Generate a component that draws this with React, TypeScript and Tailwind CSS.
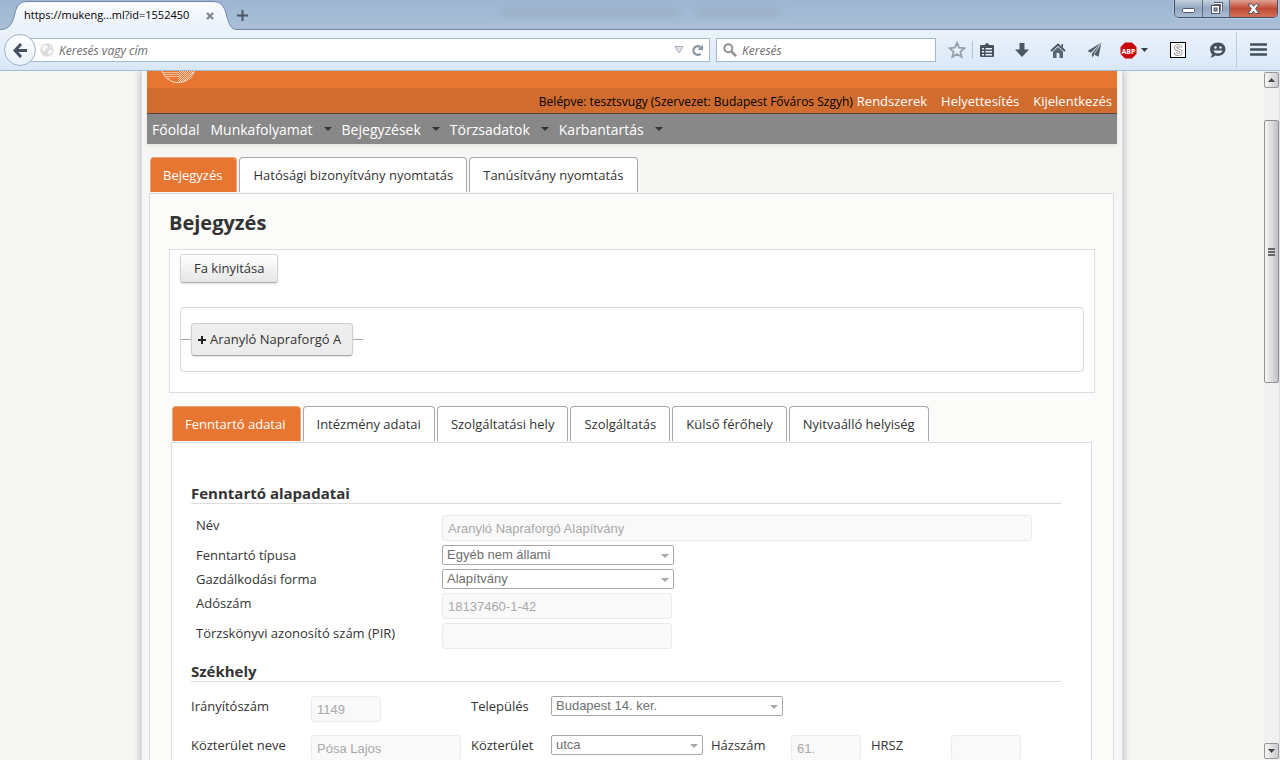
import { useState } from "react";
import type { ReactNode } from "react";

// ─── Data ──────────────────────────────────────────────────────────────────────
const PAGE_TABS = ["Bejegyzés", "Hatósági bizonyítvány nyomtatás", "Tanúsítvány nyomtatás"];

const DATA_TABS = [
  "Fenntartó adatai",
  "Intézmény adatai",
  "Szolgáltatási hely",
  "Szolgáltatás",
  "Külső férőhely",
  "Nyitvaálló helyiség",
];

const MENU = ["Munkafolyamat", "Bejegyzések", "Törzsadatok", "Karbantartás"];
const USER_LINKS = ["Rendszerek", "Helyettesítés", "Kijelentkezés"];

// ─── Browser chrome ────────────────────────────────────────────────────────────
function WindowButtons() {
  return (
    <div className="mr-[2px] flex h-[18px] overflow-hidden rounded-b-[5px] border border-t-0 border-[#46546a] shadow-[0_0_2px_#dfe9f5]">
      <button aria-label="Kis méret" className="flex w-7 items-center justify-center border-r border-[#5d6c82] bg-linear-to-b from-[#c3d0df] via-[#93a7c0] to-[#a9bdd5]">
        <svg width="13" height="6" viewBox="0 0 13 6" className="mt-1">
          <rect x="0.5" y="0.5" width="12" height="4" rx="1" fill="#fff" stroke="#535666" />
        </svg>
      </button>
      <button aria-label="Előző méret" className="flex w-[27px] items-center justify-center border-r border-[#5d6c82] bg-linear-to-b from-[#c3d0df] via-[#93a7c0] to-[#a9bdd5]">
        <svg width="13" height="13" viewBox="0 0 13 13">
          <path d="M4 1.500h7.500V9" fill="none" stroke="#535666" strokeWidth="3" />
          <path d="M4 1.500h7.500V9" fill="none" stroke="#fff" strokeWidth="1.200" />
          <rect x="1.5" y="3.5" width="8" height="8" fill="#fff" stroke="#535666" />
          <rect x="4" y="6" width="3" height="3" fill="#93a7c0" stroke="#535666" />
        </svg>
      </button>
      <button aria-label="Bezárás" className="flex w-[47px] items-center justify-center bg-linear-to-b from-[#e0a192] via-[#c04a35] to-[#d4705a]">
        <svg width="13" height="12" viewBox="0 0 13 12">
          <path d="M1 1h3.600l1.900 2.400L8.400 1H12L8.600 5.800 12 10.500H8.400L6.500 8.200 4.600 10.500H1l3.400-4.700z" fill="#fff" stroke="#535666" />
        </svg>
      </button>
    </div>
  );
}

function TitleBar() {
  return (
    <div className="flex h-[30px] items-start bg-linear-to-b from-[#9db6d3] to-[#abc0d8] shadow-[inset_0_-1px_0_#7189a6]">
      <div className="relative h-[30px] w-[237px] shrink-0">
        <svg width="237" height="30" viewBox="0 0 237 30" className="absolute left-0 top-0">
          <defs>
            <linearGradient id="tabFill" x1="0" y1="0" x2="0" y2="1">
              <stop offset="0" stopColor="#fbfcfe" />
              <stop offset="1" stopColor="#e9f1fa" />
            </linearGradient>
          </defs>
          <path
            d="M0 29.500C9 29.500 12 24 14 17 16 8 18 1.500 27 1.500H213C222 1.500 225 8 227 17 229 24 231 29.500 237 29.500V30H0z"
            fill="url(#tabFill)"
          />
          <path
            d="M0 29.500C9 29.500 12 24 14 17 16 8 18 1.500 27 1.500H213C222 1.500 225 8 227 17 229 24 231 29.500 237 29.500"
            fill="none"
            stroke="#7189a6"
          />
        </svg>
        <div className="relative flex h-[30px] items-center pl-6 pt-px text-[11px] text-black">
          <span className="w-[172px] whitespace-nowrap">https://mukeng...ml?id=1552450</span>
          <button aria-label="Lap bezárása" className="ml-[10px]">
            <svg width="8" height="8" viewBox="0 0 8 8">
              <path d="M1 1l6 6M7 1L1 7" stroke="#7f8893" strokeWidth="2.400" />
            </svg>
          </button>
        </div>
      </div>
      <button aria-label="Új lap" className="mt-[10px]">
        <svg width="11" height="11" viewBox="0 0 11 11">
          <path d="M5.500 0v11M0 5.500h11" stroke="#4a5866" strokeWidth="2" />
        </svg>
      </button>
      {/* title of the window behind, seen through the glass */}
      <div className="flex flex-1 gap-4 pl-[254px] pt-2">
        <span className="h-2 w-[178px] bg-[#8f9fb2]/40 blur-[3px]" />
        <span className="h-2 w-[84px] bg-[#8f9fb2]/40 blur-[3px]" />
      </div>
      <WindowButtons />
    </div>
  );
}

const TOOL = "flex h-5 w-5 shrink-0 items-center justify-center";

function ToolbarIcons() {
  return (
    <div className="flex h-full items-center">
      <button aria-label="Könyvjelző" className={`${TOOL} ml-[11px]`}>
        <svg width="18" height="18" viewBox="0 0 18 18">
          <path d="M9 1.800l2.100 4.900 5.300.5-4 3.500 1.200 5.200L9 13.100l-4.600 2.800 1.200-5.200-4-3.500 5.300-.5z" fill="#e8eff8" stroke="#95a0ad" strokeWidth="1.800" />
        </svg>
      </button>
      <span className="ml-[5px] h-[18px] w-px bg-[#b4c3d4]" />
      <button aria-label="Könyvjelzők listája" className={`${TOOL} ml-1`}>
        <svg width="16" height="16" viewBox="0 0 16 16">
          <path d="M1 4a1 1 0 0 1 1-1h3.500L8 .8 10.500 3H14a1 1 0 0 1 1 1v10a1 1 0 0 1-1 1H2a1 1 0 0 1-1-1z" fill="#46525f" />
          <path d="M3 6h2v1.500H3zM6.500 6H13v1.500H6.500zM3 9h2v1.500H3zM6.500 9H13v1.500H6.500zM3 12h2v1.500H3zM6.500 12H13v1.500H6.500z" fill="#e8f0f9" />
        </svg>
      </button>
      <button aria-label="Letöltések" className={`${TOOL} ml-[15px]`}>
        <svg width="14" height="15" viewBox="0 0 14 15">
          <path d="M4.500 0h5v6.500H14l-7 7.500-7-7.500h4.500z" fill="#4a5763" />
        </svg>
      </button>
      <button aria-label="Kezdőlap" className={`${TOOL} ml-4`}>
        <svg width="16" height="15" viewBox="0 0 16 15">
          <path d="M1 8l7-6.500L15 8" fill="none" stroke="#46525f" strokeWidth="1.800" />
          <path d="M11.500 1H13v4l-1.500-1.500z" fill="#46525f" />
          <path d="M3 8.500L8 4l5 4.500V15H9.500v-5h-3v5H3z" fill="#596673" />
        </svg>
      </button>
      <button aria-label="Megosztás" className={`${TOOL} ml-4`}>
        <svg width="15" height="16" viewBox="0 0 15 16">
          <path d="M14.500.5L.5 9l3.300 1.800zM14.500.5L5 11.500v4l2.400-2.700 4.100 2z" fill="#4f5c69" />
          <path d="M14.500.5L7 12.500" stroke="#dfe8f2" strokeWidth="0.800" />
        </svg>
      </button>
      <button aria-label="Adblock Plus" className="ml-[16px] flex items-center gap-1">
        <svg width="17" height="17" viewBox="0 0 17 17">
          <path d="M5 .5h7L16.500 5v7L12 16.500H5L.5 12V5z" fill="#c8070d" />
          <text x="8.500" y="11.500" textAnchor="middle" fill="#fff" className="font-['Open_Sans',sans-serif] text-[7px] font-bold">
            ABP
          </text>
        </svg>
        <svg width="7" height="4" viewBox="0 0 7 4">
          <path d="M0 0h7L3.500 4z" fill="#333f4a" />
        </svg>
      </button>
      <button aria-label="Stylish" className={`${TOOL} ml-5`}>
        <svg width="16" height="16" viewBox="0 0 16 16">
          <rect x="0.5" y="0.5" width="15" height="15" fill="#fff" stroke="#000" />
          <path d="M11 5.500C10.500 3 5.500 3 5.500 5.700c0 2.800 5.500 1.500 5.500 4.500 0 2.800-5.500 2.800-6 0" fill="none" stroke="#8a8a8a" strokeWidth="3" />
          <path d="M11 5.500C10.500 3 5.500 3 5.500 5.700c0 2.800 5.500 1.500 5.500 4.500 0 2.800-5.500 2.800-6 0" fill="none" stroke="#fff" strokeWidth="1.400" />
        </svg>
      </button>
      <button aria-label="Hello" className={`${TOOL} ml-[19px]`}>
        <svg width="17" height="16" viewBox="0 0 17 16">
          <path d="M9 .5c4.400 0 7.500 2.900 7.500 6.600S13.400 14 9 14c-1 0-2-.1-2.800-.4-1.200 1.200-3 1.900-5 1.900 1.100-.8 1.700-2 1.800-3.200C1.800 11 1 9.200 1 7.100 1 3.400 4.600.5 9 .5z" fill="#46525f" />
          <circle cx="6.500" cy="5.500" r="1.200" fill="#e8f0f9" />
          <circle cx="11.500" cy="5.500" r="1.200" fill="#e8f0f9" />
          <path d="M4.500 8.500h9c-.5 3.800-8.500 3.800-9 0z" fill="#e8f0f9" />
        </svg>
      </button>
      <span className="ml-[9px] h-9 w-px bg-[#bccbdc]" />
      <button aria-label="Menü" className="ml-[13px] mr-[13px]">
        <svg width="17" height="14" viewBox="0 0 17 14">
          <path d="M1 1.500h15M1 6.500h15M1 11.500h15" stroke="#43505c" strokeWidth="2.600" strokeLinecap="round" />
        </svg>
      </button>
    </div>
  );
}

function Toolbar() {
  return (
    <div className="flex h-[41px] items-center border-b border-[#a3bbd4] bg-linear-to-b from-[#ebf2fa] to-[#d9e8f9]">
      <button aria-label="Vissza" className="relative z-10 ml-1 flex h-8 w-8 shrink-0 items-center justify-center rounded-full border border-[#9fb2c8] bg-linear-to-b from-white to-[#e8f0f9]">
        <svg width="15" height="15" viewBox="0 0 15 15">
          <path d="M8 1L2 7.500 8 14M2 7.500h12" fill="none" stroke="#46525f" strokeWidth="3" />
        </svg>
      </button>
      <div className="-ml-2 flex h-6 flex-1 items-center border border-[#a5b9ce] bg-white pl-[11px] pr-[5px]">
        <svg width="14" height="14" viewBox="0 0 14 14" className="shrink-0">
          <circle cx="7" cy="7" r="6.800" fill="#dcdcdc" />
          <path d="M3 2l4 .5 1 2-2.500 1.500L4.500 9 2 6zM9 7.500l3-1 .5 2.500L9 12 8 9.500zM9.500 2l2.500 2-2 .8z" fill="#fafafa" />
        </svg>
        <input aria-label="Keresés vagy cím" placeholder="Keresés vagy cím" className="ml-[5px] min-w-0 flex-1 pt-px text-xs italic outline-none placeholder:text-[#6e6e6e]" />
        <svg width="10" height="8" viewBox="0 0 10 8">
          <path d="M.8.5h8.400L5 7z" fill="#dde2ea" stroke="#a9b1bd" />
        </svg>
        <button aria-label="Frissítés" className="ml-[7px]">
          <svg width="13" height="13" viewBox="0 0 13 13">
            <path d="M9.500 9.800A4.300 4.300 0 1 1 9.200 3" fill="none" stroke="#8793a3" strokeWidth="2.200" />
            <path d="M12 .5V6H6.500z" fill="#8793a3" />
          </svg>
        </button>
      </div>
      <div className="ml-[6px] flex h-6 w-[220px] items-center border border-[#a5b9ce] bg-white pl-[6px]">
        <svg width="14" height="14" viewBox="0 0 14 14" className="shrink-0">
          <circle cx="5.300" cy="5.300" r="4" fill="none" stroke="#909090" strokeWidth="2" />
          <path d="M8.300 8.300l4.800 4.800" stroke="#909090" strokeWidth="2.600" />
        </svg>
        <input aria-label="Keresés" placeholder="Keresés" className="ml-[5px] min-w-0 flex-1 pt-px text-xs italic outline-none placeholder:text-[#6e6e6e]" />
      </div>
      <ToolbarIcons />
    </div>
  );
}

const SCROLL_BTN = "flex h-4 items-center justify-center rounded-[2px] border border-[#989898] bg-linear-to-r from-[#f6f6f6] to-[#cbcbd0]";

function Scrollbar() {
  return (
    <div className="flex w-4 shrink-0 flex-col border-r border-[#e0e0e0] bg-[#f0f0f0] pt-px">
      <button aria-label="Fel" className={SCROLL_BTN}>
        <svg width="7" height="4" viewBox="0 0 7 4">
          <path d="M0 4h7L3.500 0z" fill="#444" />
        </svg>
      </button>
      <div className="mt-8 flex h-[263px] flex-col items-center justify-center gap-px rounded-[2px] border border-[#919191] bg-linear-to-r from-[#f6f6f6] via-[#dcdcde] to-[#bfbfc6]">
        <span className="h-[2px] w-[7px] bg-[#666]" />
        <span className="h-[2px] w-[7px] bg-[#666]" />
        <span className="h-[2px] w-[7px] bg-[#666]" />
      </div>
      <div className="flex-1" />
      <button aria-label="Le" className={`${SCROLL_BTN} mb-px`}>
        <svg width="7" height="4" viewBox="0 0 7 4">
          <path d="M0 0h7L3.500 4z" fill="#444" />
        </svg>
      </button>
    </div>
  );
}

// ─── Page header ───────────────────────────────────────────────────────────────
function Header() {
  return (
    <header className="shadow-[0_2px_4px_rgba(0,0,0,0.08)]">
      <div className="h-[17px] bg-[#e67632] pl-[14px]">
        {/* lower part of the crest */}
        <svg width="34" height="14" viewBox="0 0 34 14">
          <defs>
            <pattern id="dots" width="2" height="2" patternUnits="userSpaceOnUse">
              <path d="M0 0h1v1H0zM1 1h1v1H1z" fill="#f6cfb4" />
            </pattern>
            <clipPath id="bowl">
              <path d="M0 0h34C32 8 25 12 17 12S2 8 0 0z" />
            </clipPath>
          </defs>
          <g clipPath="url(#bowl)">
            <rect x="17" y="0" width="17" height="13" fill="url(#dots)" />
            <path d="M2 1.500h15M3 3.500h14M4 5.500h13M6 7.500h3" stroke="#f3bd98" />
          </g>
          <path d="M1 0C4 7.500 10 11.500 17 11.500S30 7.500 33 0" fill="none" stroke="#f9dfcd" />
        </svg>
      </div>
      <div className="flex h-[26px] items-center justify-end border-b border-[#4c4440] bg-[#d16c2f] pr-[5px] pt-[2px] text-[13px] text-white">
        <span className="mr-1 text-xs text-black">Belépve: tesztsvugy (Szervezet: Budapest Főváros Szgyh)</span>
        <nav className="flex gap-[14px]">
          {USER_LINKS.map(link => (
            <a key={link} href="#">{link}</a>
          ))}
        </nav>
      </div>
      <nav className="flex h-[30px] items-center bg-[#888] pl-[5px] pt-[2px] text-sm text-white">
        <a href="#" className="mr-[11px]">Főoldal</a>
        {MENU.map(item => (
          <a key={item} href="#" className="mr-[10px] flex items-center gap-[11px]">
            {item}
            <svg width="8" height="4" viewBox="0 0 8 4" className="mb-[2px]">
              <path d="M0 0h8L4 4z" fill="#333" />
            </svg>
          </a>
        ))}
      </nav>
    </header>
  );
}

// ─── Building blocks ───────────────────────────────────────────────────────────
function TabStrip({ tabs, active, onSelect }: {
  tabs: string[]; active: number; onSelect: (i: number) => void;
}) {
  return (
    <div role="tablist" className="mb-px flex gap-[2px] pl-px">
      {tabs.map((tab, i) => (
        <button
          key={tab}
          role="tab"
          aria-selected={i === active}
          onClick={() => onSelect(i)}
          className={
            i === active
              ? "h-[35px] rounded-t-[4px] border border-b-0 border-[#e9a67c] bg-[#e67632] pl-3 pr-[14px] pt-[2px] text-white"
              : "h-[35px] rounded-t-[4px] border border-b-0 border-[#a8a8a8] bg-white px-[13px] pt-[2px] text-[#333]"
          }
        >
          {tab}
        </button>
      ))}
    </div>
  );
}

function TextField({ id, value, className }: { id: string; value: string; className: string }) {
  return (
    <input
      id={id}
      defaultValue={value}
      disabled
      className={`h-[26px] rounded-[3px] border border-[#ebebeb] bg-[#f9f9f9] px-[5px] font-['Liberation_Sans',sans-serif] text-[13px] text-[#a9a9a9] ${className}`}
    />
  );
}

function SelectField({ id, value, className }: { id: string; value: string; className: string }) {
  return (
    <div className={`relative h-5 ${className}`}>
      <select
        id={id}
        disabled
        className="block h-5 w-full appearance-none rounded-[2px] border border-[#a8a8a8] bg-white px-1 font-['Liberation_Sans',sans-serif] text-[13px] leading-[18px] text-[#707070] opacity-100"
      >
        <option>{value}</option>
      </select>
      <svg width="8" height="4" viewBox="0 0 8 4" className="pointer-events-none absolute right-[5px] top-[9px]">
        <path d="M0 0h8L4 4z" fill="#a8a8a8" />
      </svg>
    </div>
  );
}

function SectionTitle({ children }: { children: ReactNode }) {
  return (
    <h2 className="h-5 border-b border-[#dcdcdc] text-[15px] font-bold leading-[19px] text-[#333]">{children}</h2>
  );
}

function Row({ id, label, children }: { id: string; label: string; children: ReactNode }) {
  return (
    <div className="flex items-start">
      <label htmlFor={id} className="w-[246px] shrink-0 leading-5">{label}</label>
      {children}
    </div>
  );
}

// ─── Organisation tree ─────────────────────────────────────────────────────────
function TreeBox() {
  return (
    <div className="h-36 border border-[#dcdcdc] bg-white px-[10px] pt-1">
      <button className="h-[29px] rounded-[3px] border border-[#d4d4d4] border-b-[#b0b0b0] bg-linear-to-b from-white to-[#e6e6e6] px-[13px] shadow-[0_1px_2px_rgba(0,0,0,0.12)]">
        Fa kinyitása
      </button>
      <div className="mt-6 flex h-[65px] items-center rounded-[4px] border border-[#dcdcdc]">
        <span className="h-px w-[10px] bg-[#a8a8a8]" />
        <button className="flex h-[33px] items-center gap-1 rounded-[4px] border border-[#d0d0d0] border-b-[#a8a8a8] bg-[#ededed] pl-[6px] pr-[11px] shadow-[0_1px_2px_rgba(0,0,0,0.12)]">
          <svg width="8" height="8" viewBox="0 0 8 8">
            <path d="M4 0v8M0 4h8" stroke="#222" strokeWidth="2" />
          </svg>
          Aranyló Napraforgó A
        </button>
        <span className="h-px w-[10px] bg-[#a8a8a8]" />
      </div>
    </div>
  );
}

// ─── Maintainer form ───────────────────────────────────────────────────────────
function MaintainerForm() {
  return (
    <form className="border border-[#dcdcdc] bg-white pb-24 pl-[19px] pr-[30px] pt-[41px]">
      <SectionTitle>Fenntartó alapadatai</SectionTitle>
      <div className="mt-[11px] flex flex-col gap-1 pl-[5px]">
        <Row id="nev" label="Név">
          <TextField id="nev" value="Aranyló Napraforgó Alapítvány" className="w-[590px]" />
        </Row>
        <Row id="tipus" label="Fenntartó típusa">
          <SelectField id="tipus" value="Egyéb nem állami" className="w-[232px]" />
        </Row>
        <Row id="forma" label="Gazdálkodási forma">
          <SelectField id="forma" value="Alapítvány" className="w-[232px]" />
        </Row>
        <Row id="adoszam" label="Adószám">
          <TextField id="adoszam" value="18137460-1-42" className="w-[230px]" />
        </Row>
        <Row id="pir" label="Törzskönyvi azonosító szám (PIR)">
          <TextField id="pir" value="" className="w-[230px]" />
        </Row>
      </div>

      <div className="mt-[13px]">
        <SectionTitle>Székhely</SectionTitle>
      </div>
      <div className="mt-[14px] grid grid-cols-[120px_160px_80px_160px_80px_80px_80px_70px] items-start gap-y-[13px] leading-5">
        <label htmlFor="irsz">Irányítószám</label>
        <TextField id="irsz" value="1149" className="w-[70px]" />
        <label htmlFor="telepules">Település</label>
        <SelectField id="telepules" value="Budapest 14. ker." className="col-span-5 w-[232px]" />
        <label htmlFor="kozterulet-neve">Közterület neve</label>
        <TextField id="kozterulet-neve" value="Pósa Lajos" className="w-[150px]" />
        <label htmlFor="kozterulet">Közterület</label>
        <SelectField id="kozterulet" value="utca" className="w-[152px]" />
        <label htmlFor="hazszam">Házszám</label>
        <TextField id="hazszam" value="61." className="w-[70px]" />
        <label htmlFor="hrsz">HRSZ</label>
        <TextField id="hrsz" value="" className="w-[70px]" />
      </div>
    </form>
  );
}

// ─── App ───────────────────────────────────────────────────────────────────────
export default function App() {
  const [pageTab, setPageTab] = useState(0);
  const [dataTab, setDataTab] = useState(0);

  return (
    <div className="flex h-screen flex-col overflow-hidden font-['Open_Sans','Noto_Sans',sans-serif]">
      <TitleBar />
      <Toolbar />
      <div className="flex min-h-0 flex-1 bg-[#f6f6f4]">
        <div className="min-w-0 flex-1 overflow-hidden">
          <div className="mx-auto max-w-[982px] border-x border-[#dcdcdc] bg-[#f6f6f4] px-[5px] text-[13px] text-[#333] shadow-[0_0_8px_rgba(0,0,0,0.3)]">
            <Header />
            <main className="mt-[13px] pl-[2px] pr-[3px]">
              <TabStrip tabs={PAGE_TABS} active={pageTab} onSelect={setPageTab} />
              <div className="border border-[#dcdcdc] bg-[#fbfbf9] pl-[19px] pr-[18px]">
                <h1 className="pb-3 pt-[15px] text-xl font-bold leading-7">Bejegyzés</h1>
                <TreeBox />
                <div className="mt-[13px] pl-[2px] pr-[3px]">
                  <TabStrip tabs={DATA_TABS} active={dataTab} onSelect={setDataTab} />
                  <MaintainerForm />
                </div>
              </div>
            </main>
          </div>
        </div>
        <Scrollbar />
      </div>
    </div>
  );
}
